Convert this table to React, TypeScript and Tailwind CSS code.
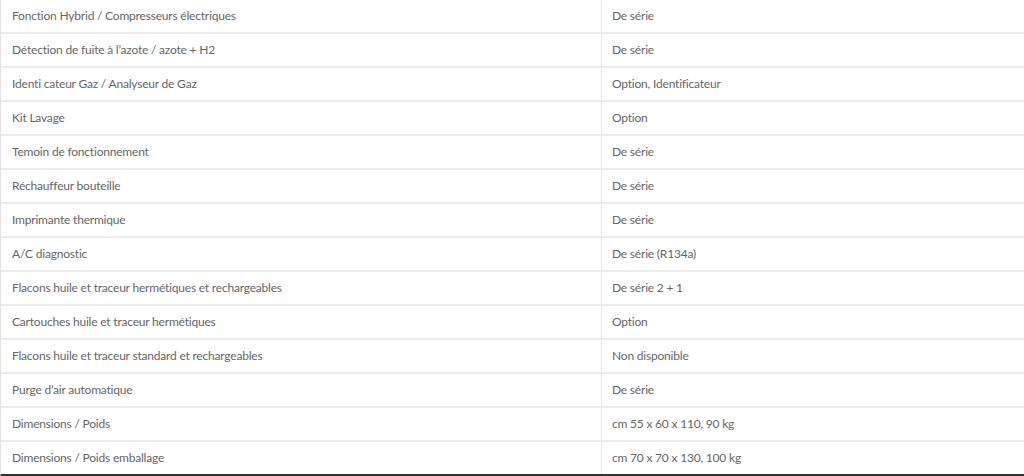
import React from 'react';

const rows: [string, string][] = [
  ['Fonction Hybrid / Compresseurs électriques', 'De série'],
  ["Détection de fuite à l’azote / azote + H2", 'De série'],
  ['Identi cateur Gaz / Analyseur de Gaz', 'Option, Identificateur'],
  ['Kit Lavage', 'Option'],
  ['Temoin de fonctionnement', 'De série'],
  ['Réchauffeur bouteille', 'De série'],
  ['Imprimante thermique', 'De série'],
  ['A/C diagnostic', 'De série (R134a)'],
  ['Flacons huile et traceur hermétiques et rechargeables', 'De série 2 + 1'],
  ['Cartouches huile et traceur hermétiques', 'Option'],
  ['Flacons huile et traceur standard et rechargeables', 'Non disponible'],
  ["Purge d’air automatique", 'De série'],
  ['Dimensions / Poids', 'cm 55 x 60 x 110, 90 kg'],
  ['Dimensions / Poids emballage', 'cm 70 x 70 x 130, 100 kg'],
];

export default function App() {
  return (
    <div className="w-[1024px] h-[476px] overflow-hidden bg-white font-['Lato',sans-serif] text-[12px] tracking-[-0.2px] [font-variant-ligatures:none] text-[#666]">
      <div className="border-l border-[#e3e3e3] border-b-2 border-b-[#333]">
        {rows.map(([label, value], i) => {
          const last = i === rows.length - 1;
          return (
            <div
              key={i}
              className={last ? 'flex h-[32px]' : 'flex h-[34px] border-b-2 border-[#ececec]'}
            >
              <div className="w-[601px] shrink-0 flex items-center pl-[11px] border-r border-[#e6e6e6]">
                {label}
              </div>
              <div className="flex-1 flex items-center pl-[10px]">{value}</div>
            </div>
          );
        })}
      </div>
    </div>
  );
}
